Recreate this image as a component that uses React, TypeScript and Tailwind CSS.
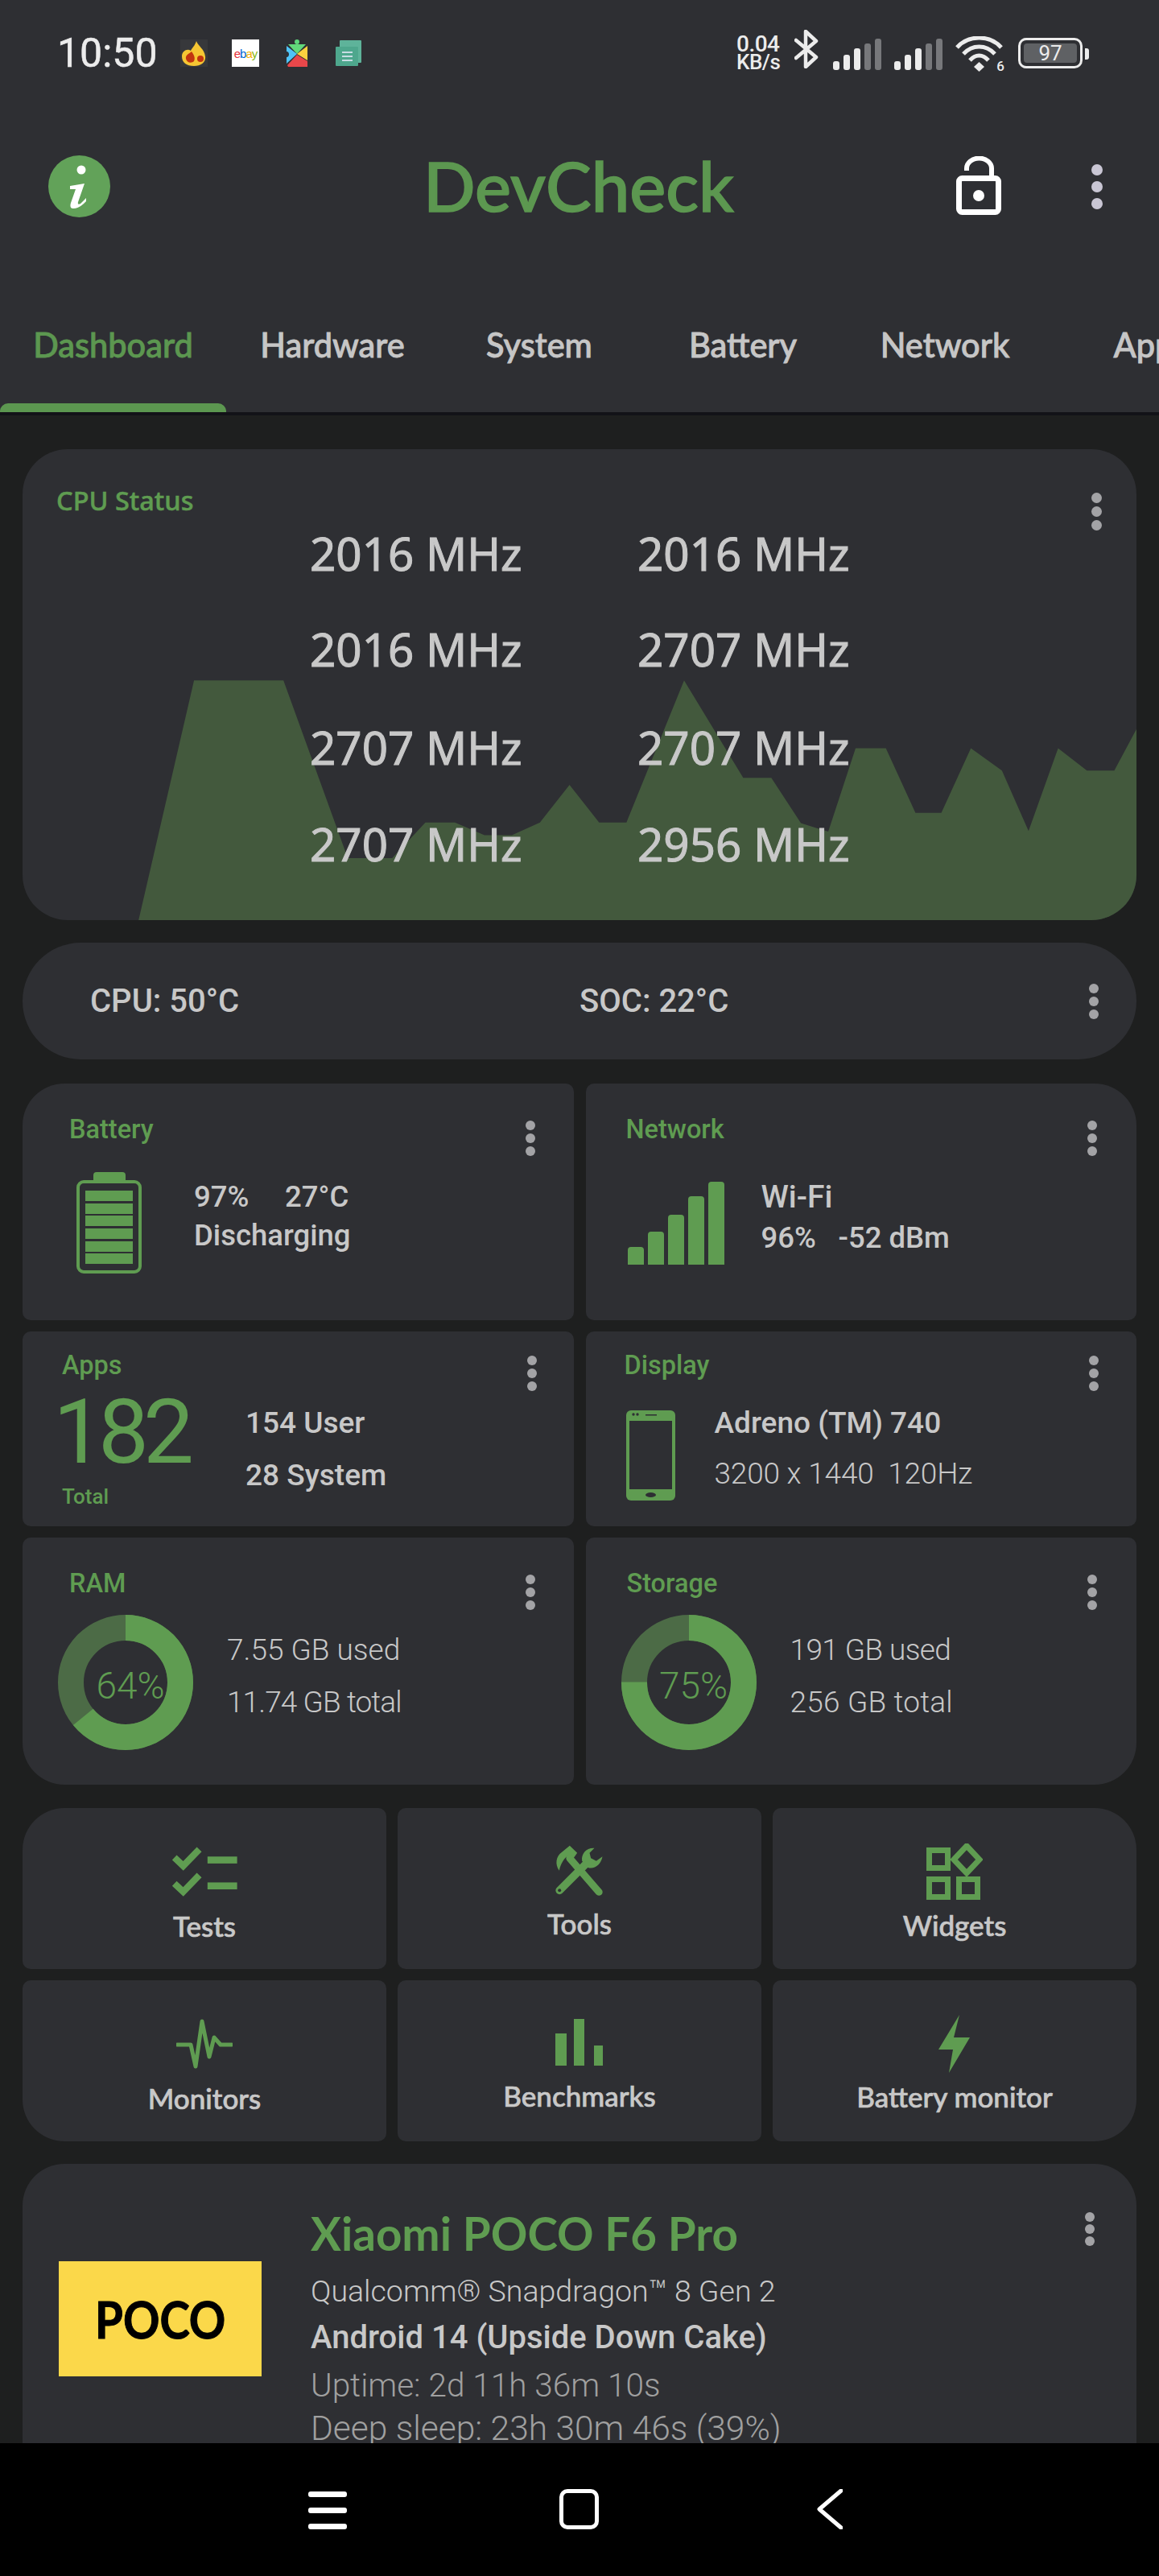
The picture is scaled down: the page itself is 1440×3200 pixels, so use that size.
import React from "react";

const G = "#5f9c51";

function Kebab({ d = 12, gap = 4, cls = "bg-[#a3a3a6]" }: { d?: number; gap?: number; cls?: string }) {
  return (
    <div className="flex flex-col shrink-0" style={{ gap }}>
      {[0, 1, 2].map((i) => (
        <div key={i} className={`rounded-full ${cls}`} style={{ width: d, height: d }} />
      ))}
    </div>
  );
}

function Signal() {
  return (
    <svg width="60" height="39" viewBox="0 0 60 39">
      <rect x="0" y="28" width="8" height="11" rx="3" fill="#ececec" />
      <rect x="13" y="20" width="8" height="19" rx="3" fill="#ececec" />
      <rect x="26" y="12" width="8" height="27" rx="3" fill="#ececec" />
      <rect x="39" y="6" width="8" height="33" rx="3" fill="#77787b" />
      <rect x="52" y="0" width="8" height="39" rx="3" fill="#77787b" />
    </svg>
  );
}

function StatusBar() {
  return (
    <div className="h-[132px] flex items-start pl-[71px] pt-[40px] text-[#ececec]">
      <span className="w-[153px] h-[52px] leading-[52px] text-[50px] font-['Roboto',sans-serif] [-webkit-text-stroke:0.5px_#ececec]">10:50</span>
      <svg width="34" height="34" viewBox="0 0 34 34" className="mt-[9px]">
        <rect width="34" height="34" fill="#37383b" />
        <path d="M20 2 C22 8 30 12 31 21 C32 29 25 33 17 33 C8 33 2 29 2 21 C2 14 9 11 13 14 C15 10 18 8 20 2Z" fill="#f6c633" />
        <path d="M14 15 C17 19 19 23 17 27 C14 30 8 29 7 24 C6 19 11 18 14 15Z" fill="#c2350f" />
        <circle cx="25" cy="24" r="4" fill="#c2350f" />
      </svg>
      <div className="w-[34px] h-[34px] ml-[30px] mt-[9px] bg-white flex items-center justify-center text-[15px] font-['Liberation_Sans',sans-serif] tracking-[-1px] leading-none">
        <span className="text-[#e53238]">e</span>
        <span className="text-[#0064d2]">b</span>
        <span className="text-[#f5af02]">a</span>
        <span className="text-[#86b817]">y</span>
      </div>
      <svg width="26" height="34" viewBox="0 0 26 34" className="ml-[34px] mt-[9px]">
        <circle cx="13" cy="3" r="3" fill="#5fd67c" />
        <path d="M2 6 H24 L13 18Z" fill="#62d97b" />
        <path d="M0 8 L13 18 L0 30 V22 C4 22 4 15 0 15Z" fill="#4fc3f7" />
        <path d="M26 8 V26 L13 18Z" fill="#fbd23f" />
        <path d="M1 32 L13 19 L26 27 V34 H2Z" fill="#e8474a" />
      </svg>
      <svg width="32" height="32" viewBox="0 0 32 32" className="ml-[35px] mt-[10px]">
        <rect x="5" y="0" width="27" height="28" rx="1" fill="#5eb39a" />
        <rect x="0" y="8" width="28" height="24" rx="1" fill="#4ea78d" />
        <path d="M8 15 H21 M8 20 H21 M8 25 H21" stroke="#eef" strokeWidth="1.5" />
      </svg>
      <div className="ml-[466px] w-[58px] mt-[3px] flex flex-col text-[#ececec] font-['Roboto',sans-serif] font-medium">
        <span className="text-[28px] h-[23px] leading-[23px] tracking-[-0.5px]">0.04</span>
        <span className="text-[26px] h-[22px] leading-[22px] tracking-[-0.5px]">KB/s</span>
      </div>
      <svg width="30" height="48" viewBox="0 0 30 48" className="ml-[14px] -mt-[3px]">
        <path d="M2 13 L27 34 L14 46 V2 L27 14 L2 35" fill="none" stroke="#ececec" strokeWidth="4.5" strokeLinejoin="round" strokeLinecap="round" />
      </svg>
      <div className="ml-[18px] mt-[8px]"><Signal /></div>
      <div className="ml-[16px] mt-[8px]"><Signal /></div>
      <div className="relative ml-[16px] mt-[5px] w-[59px] h-[44px]">
        <svg width="59" height="44" viewBox="0 0 59 44">
          <path d="M2 14 C16 -2 43 -2 57 14" fill="none" stroke="#ececec" strokeWidth="5" />
          <path d="M10 22 C21 10 38 10 49 22" fill="none" stroke="#ececec" strokeWidth="5" />
          <path d="M18 30 C25 22 34 22 41 30" fill="none" stroke="#ececec" strokeWidth="5" />
          <path d="M29.5 32 L36 38 L29.5 44 L23 38Z" fill="#ececec" />
        </svg>
        <span className="absolute right-[-2px] bottom-[-2px] text-[17px] leading-none font-['Roboto',sans-serif] font-medium">6</span>
      </div>
      <div className="ml-[19px] mt-[7px] w-[80px] h-[38px] rounded-[10px] border-[3px] border-[#ececec] p-[4px]">
        <div className="w-full h-full rounded-[4px] bg-[#5f6164] flex items-center justify-center text-[26px] leading-none font-['Roboto',sans-serif]">97</div>
      </div>
      <div className="ml-[3px] mt-[20px] w-[5px] h-[14px] rounded-r-[3px] bg-[#ececec]" />
    </div>
  );
}

function AppBar() {
  return (
    <div className="h-[270px] flex items-start pl-[60px] pt-[61px]">
      <svg width="77" height="77" viewBox="0 0 77 77">
        <circle cx="38.5" cy="38.5" r="38.5" fill="#62a259" />
        <circle cx="41" cy="18" r="5.5" fill="#fff" />
        <path d="M27 38 L45 35 L37 58 Q36 62 40 60 L47 53 L47 57 Q39 66 31 66 Q26 66 28 59 L34 42 Q28 42 27 42Z" fill="#fff" />
      </svg>
      <span className="ml-[389px] w-[662px] h-[77px] leading-[75px] text-[85px] font-medium text-[#5c9750] font-['Lato',sans-serif] [-webkit-text-stroke:1.5px_#5c9750]">DevCheck</span>
      <svg width="56" height="73" viewBox="0 0 56 73" className="mt-[1px]">
        <rect x="3.5" y="27.5" width="49" height="42" rx="4" fill="none" stroke="#fff" strokeWidth="7" />
        <path d="M13 18 V15 A15 12 0 0 1 44 15 V27" fill="none" stroke="#fff" strokeWidth="6" />
        <ellipse cx="28" cy="49" rx="7" ry="7" fill="#fff" />
      </svg>
      <div className="ml-[112px] mt-[11px]"><Kebab d={14} gap={7} cls="bg-[#c9c6d4]" /></div>
    </div>
  );
}

function Tabs() {
  const tabs: [string, string][] = [
    ["Dashboard", "w-[281px]"],
    ["Hardware", "w-[264px]"],
    ["System", "w-[250px]"],
    ["Battery", "w-[256px]"],
    ["Network", "w-[246px]"],
    ["Apps", "w-[266px]"],
  ];
  return (
    <div className="flex h-[110px] overflow-hidden font-['Lato',sans-serif] text-[41.5px] font-medium">
      {tabs.map(([t, w], i) => (
        <div
          key={t}
          className={`${w} shrink-0 relative h-[110px] text-center pt-[1px] leading-[50px] ${
            i === 0 ? "text-[#5c9750] [-webkit-text-stroke:0.9px_#5c9750]" : "text-[#c6c6c6] [-webkit-text-stroke:0.9px_#c6c6c6]"
          }`}
        >
          {t}
          {i === 0 && <div className="absolute left-0 right-0 bottom-0 h-[11px] rounded-t-[10px] bg-[#5c9750]" />}
        </div>
      ))}
    </div>
  );
}

const chartPts =
  "187,1525 262,772 383,772 470,1330 530,1330 575,1218 615,1218 655,1258 692,1258 730,1218 770,1100 810,1218 847,1218 925,772 1005,1078 1043,1078 1083,1220 1120,1247 1157,985 1198,985 1238,1188 1273,1188 1313,985 1355,1055 1391,1245 1431,985 1470,1055 1507,1055 1537,925 1537,1525";

function CpuCard() {
  const freqs = ["2016 MHz", "2016 MHz", "2016 MHz", "2707 MHz", "2707 MHz", "2707 MHz", "2707 MHz", "2956 MHz"];
  return (
    <div className="relative shrink-0 h-[585px] rounded-[56px] bg-[#2e2f33] overflow-hidden pt-[44px] pl-[42px] pr-[43px] font-['Noto_Sans',sans-serif]">
      <svg className="absolute inset-0 w-full h-full" viewBox="30 45 1507 1480" preserveAspectRatio="none">
        <polygon points={chartPts} fill="#43593d" />
      </svg>
      <div className="relative flex justify-between h-[26px]">
        <span className="text-[32.5px] leading-[40px] h-[40px] font-medium text-[#5f9c51] [-webkit-text-stroke:0.5px_#5f9c51]">CPU Status</span>
        <div className="mt-[10px]"><Kebab d={13} gap={4} /></div>
      </div>
      <div className="relative ml-[315px] grid grid-cols-[407px_1fr] grid-rows-[120px_118px_126px_114px] items-center text-[56.5px] text-[#c8c8c8] [-webkit-text-stroke:1px_#c8c8c8]">
        {freqs.map((f, i) => (
          <span key={i} className="leading-[70px]">{f}</span>
        ))}
      </div>
    </div>
  );
}

function TempCard() {
  return (
    <div className="h-[145px] rounded-full bg-[#2e2f33] flex items-center pl-[84px] pr-[47px] text-[40px] font-medium text-[#c8c8c8] font-['Roboto',sans-serif]">
      <span className="w-[608px]">CPU: 50°C</span>
      <span className="flex-1">SOC: 22°C</span>
      <Kebab d={12} gap={4} />
    </div>
  );
}

function Title({ children, cls = "" }: { children: React.ReactNode; cls?: string }) {
  return <span className={`h-[40px] leading-[40px] text-[32.5px] font-medium text-[#5f9c51] ${cls}`}>{children}</span>;
}

function BatteryIcon() {
  return (
    <svg width="81" height="126" viewBox="0 0 81 126">
      <rect x="21" y="0" width="40" height="14" rx="4" fill={G} />
      <rect x="2" y="12" width="77" height="112" rx="7" fill="none" stroke={G} strokeWidth="4" />
      {[23, 39, 54, 70, 86, 101].map((y) => (
        <rect key={y} x="11" y={y} width="59" height="13" fill={G} />
      ))}
    </svg>
  );
}

function BarsIcon() {
  const hs = [22, 41, 62, 85, 103];
  return (
    <svg width="120" height="103" viewBox="0 0 120 103">
      {hs.map((h, i) => (
        <path key={i} d={`M${i * 25} 103 V${103 - h + 4} Q${i * 25} ${103 - h} ${i * 25 + 4} ${103 - h} H${i * 25 + 16} Q${i * 25 + 20} ${103 - h} ${i * 25 + 20} ${103 - h + 4} V103Z`} fill={G} />
      ))}
    </svg>
  );
}

function PhoneIcon() {
  return (
    <svg width="61" height="112" viewBox="0 0 61 112">
      <rect width="61" height="112" rx="6" fill={G} />
      <rect x="4" y="13" width="53" height="85" fill="#2e2f33" />
      <circle cx="9" cy="5" r="1.7" fill="#2e2f33" />
      <circle cx="14" cy="5" r="1.7" fill="#2e2f33" />
      <rect x="24" y="5" width="14" height="1.5" fill="#2e2f33" />
      <ellipse cx="30.5" cy="105" rx="6.5" ry="3" fill="#2e2f33" />
    </svg>
  );
}

function Donut({ pct, label }: { pct: number; label: string }) {
  const r = 68;
  const c = 2 * Math.PI * r;
  return (
    <div className="relative w-[168px] h-[168px] shrink-0">
      <svg width="168" height="168" viewBox="0 0 168 168">
        <circle cx="84" cy="84" r={r} fill="none" stroke="#4c6b46" strokeWidth="32" />
        <circle cx="84" cy="84" r={r} fill="none" stroke={G} strokeWidth="32" strokeDasharray={`${(c * pct) / 100} ${c}`} transform="rotate(-90 84 84)" />
      </svg>
      <span className="absolute inset-0 flex items-center justify-center pt-[9px] pl-[12px] text-[46px] text-[#5f9c51] font-['Roboto',sans-serif] font-light">{label}</span>
    </div>
  );
}

function InfoGrid() {
  return (
    <div className="grid grid-cols-2 grid-rows-[294px_242px_307px] gap-x-[15px] gap-y-[14px] font-['Roboto',sans-serif] text-[#c8c8c8]">
      <div className="bg-[#2e2f33] rounded-[10px] rounded-tl-[52px] pt-[37px] pl-[58px] pr-[48px]">
        <div className="flex justify-between h-[40px]">
          <Title>Battery</Title>
          <div className="mt-[9px]"><Kebab /></div>
        </div>
        <div className="flex mt-[33px] pl-[9px]">
          <BatteryIcon />
          <div className="ml-[65px] mt-[7px] text-[36.5px] font-medium">
            <div className="h-[48px] leading-[48px] flex"><span className="w-[113px]">97%</span><span>27°C</span></div>
            <div className="h-[48px] leading-[48px]">Discharging</div>
          </div>
        </div>
      </div>
      <div className="bg-[#2e2f33] rounded-[10px] rounded-tr-[52px] pt-[37px] pl-[50px] pr-[49px]">
        <div className="flex justify-between h-[40px]">
          <Title>Network</Title>
          <div className="mt-[9px]"><Kebab /></div>
        </div>
        <div className="flex mt-[45px] pl-[2px]">
          <BarsIcon />
          <div className="ml-[46px] -mt-[5px] text-[36.5px] font-medium">
            <div className="h-[48px] leading-[48px] text-[39px]">Wi-Fi</div>
            <div className="h-[54px] leading-[54px] flex"><span className="w-[96px]">96%</span><span>-52 dBm</span></div>
          </div>
        </div>
      </div>
      <div className="bg-[#2e2f33] rounded-[10px] pl-[49px] pr-[46px] pt-[22px]">
        <div className="flex justify-between h-[40px]">
          <Title>Apps</Title>
          <div className="mt-[8px]"><Kebab /></div>
        </div>
        <div className="flex -mt-[10px]">
          <div className="w-[234px] -ml-[11px] flex flex-col">
            <span className="mt-[25px] h-[96px] leading-[96px] text-[112px] text-[#5f9c51] tracking-[-7px] font-normal">182</span>
            <span className="ml-[11px] mt-[18px] h-[28px] leading-[28px] text-[26px] font-medium text-[#5f9c51]">Total</span>
          </div>
          <div className="text-[37px] font-medium ml-[5px] mt-[37px]">
            <div className="h-[50px] leading-[50px]">154 User</div>
            <div className="h-[50px] leading-[50px] mt-[15px]">28 System</div>
          </div>
        </div>
      </div>
      <div className="bg-[#2e2f33] rounded-[10px] pl-[48px] pr-[47px] pt-[22px]">
        <div className="flex justify-between h-[40px]">
          <Title>Display</Title>
          <div className="mt-[8px]"><Kebab /></div>
        </div>
        <div className="flex mt-[36px] ml-[2px]">
          <PhoneIcon />
          <div className="ml-[49px] -mt-[9px] text-[37px]">
            <div className="h-[50px] leading-[50px] font-medium">Adreno (TM) 740</div>
            <div className="h-[50px] leading-[50px] mt-[13px] font-light whitespace-pre tracking-[-0.2px]">3200 x 1440  120Hz</div>
          </div>
        </div>
      </div>
      <div className="bg-[#2e2f33] rounded-[10px] rounded-bl-[52px] pl-[58px] pr-[48px] pt-[37px]">
        <div className="flex justify-between h-[40px]">
          <Title>RAM</Title>
          <div className="mt-[9px]"><Kebab /></div>
        </div>
        <div className="flex mt-[19px] -ml-[14px]">
          <Donut pct={64} label="64%" />
          <div className="ml-[42px] mt-[19px] text-[37px] font-light">
            <div className="h-[50px] leading-[50px]">7.55 GB used</div>
            <div className="h-[50px] leading-[50px] mt-[15px] tracking-[-0.9px]">11.74 GB total</div>
          </div>
        </div>
      </div>
      <div className="bg-[#2e2f33] rounded-[10px] rounded-br-[52px] pl-[51px] pr-[49px] pt-[37px]">
        <div className="flex justify-between h-[40px]">
          <Title>Storage</Title>
          <div className="mt-[9px]"><Kebab /></div>
        </div>
        <div className="flex mt-[19px] -ml-[7px]">
          <Donut pct={75} label="75%" />
          <div className="ml-[42px] mt-[19px] text-[37px] font-light">
            <div className="h-[50px] leading-[50px] tracking-[-0.6px]">191 GB used</div>
            <div className="h-[50px] leading-[50px] mt-[15px] tracking-[0.2px]">256 GB total</div>
          </div>
        </div>
      </div>
    </div>
  );
}

const Check = ({ y }: { y: number }) => (
  <g transform={`translate(0 ${y})`}>
    <polyline points="50,84 83,115 143,53" fill="none" stroke={G} strokeWidth="25" />
    <rect x="174" y="80" width="111" height="26" fill={G} />
  </g>
);

const icons: Record<string, React.ReactNode> = {
  Tests: (
    <svg width="82" height="63" viewBox="40 40 245 190">
      <Check y={0} />
      <Check y={97} />
    </svg>
  ),
  Tools: (
    <svg width="62" height="65" viewBox="90 60 185 195">
      <path d="M146 65 L174 92 L157 116 L141 101 C125 112 112 132 107 158 C90 135 95 105 116 90Z" fill={G} />
      <line x1="146" y1="112" x2="255" y2="238" stroke={G} strokeWidth="27" strokeLinecap="round" />
      <line x1="108" y1="232" x2="215" y2="125" stroke={G} strokeWidth="29" strokeLinecap="round" />
      <path d="M238 74 C208 72 188 95 192 122 L212 146 C235 155 262 140 268 106 L245 122 L225 112 L220 92Z" fill={G} />
      <circle cx="108" cy="232" r="6" fill="#2e2f33" />
    </svg>
  ),
  Widgets: (
    <svg width="70" height="70" viewBox="0 0 70 70" fill="none" stroke={G} strokeWidth="7">
      <rect x="3.5" y="8.5" width="23" height="22" />
      <path d="M50 3 L66 20 L50 37 L34 20Z" />
      <rect x="3.5" y="44.5" width="23" height="22" />
      <rect x="40.5" y="44.5" width="23" height="22" />
    </svg>
  ),
  Monitors: (
    <svg width="70" height="68" viewBox="0 0 70 68">
      <polyline points="1,35 18,35 24,62 32,6 41,50 47,26 55,35 69,35" fill="none" stroke={G} strokeWidth="5" strokeLinejoin="round" strokeLinecap="round" />
    </svg>
  ),
  Benchmarks: (
    <svg width="60" height="58" viewBox="0 0 60 58" fill={G}>
      <rect x="0" y="18" width="14" height="40" />
      <rect x="23" y="0" width="13" height="58" />
      <rect x="48" y="33" width="11" height="25" />
    </svg>
  ),
  "Battery monitor": (
    <svg width="40" height="72" viewBox="0 0 40 72">
      <polygon points="26,0 0,43 18,43 13,72 39,28 19,28" fill={G} />
    </svg>
  ),
};

function ActionCell({ label, cls, iconTop, textTop }: { label: string; cls: string; iconTop: number; textTop: number }) {
  return (
    <div className={`bg-[#2e2f33] h-[200px] flex flex-col items-center ${cls}`}>
      <div className="h-[72px] flex items-start justify-center" style={{ marginTop: iconTop }}>{icons[label]}</div>
      <span className="h-[44px] leading-[44px] text-[35px] font-medium text-[#c8c8c8] font-['Lato',sans-serif] [-webkit-text-stroke:0.7px_#c8c8c8]" style={{ marginTop: textTop }}>{label}</span>
    </div>
  );
}

function Actions() {
  return (
    <div className="grid grid-cols-3 gap-x-[14px] gap-y-[14px]">
      <ActionCell label="Tests" cls="rounded-[10px] rounded-tl-[52px]" iconTop={47} textTop={5} />
      <ActionCell label="Tools" cls="rounded-[10px]" iconTop={45} textTop={4} />
      <ActionCell label="Widgets" cls="rounded-[10px] rounded-tr-[52px]" iconTop={44} textTop={7} />
      <ActionCell label="Monitors" cls="rounded-[10px] rounded-bl-[52px]" iconTop={45} textTop={7} />
      <ActionCell label="Benchmarks" cls="rounded-[10px]" iconTop={48} textTop={1} />
      <ActionCell label="Battery monitor" cls="rounded-[10px] rounded-br-[52px]" iconTop={43} textTop={7} />
    </div>
  );
}

function DeviceCard() {
  return (
    <div className="bg-[#2e2f33] rounded-t-[52px] shrink-0 h-[420px] flex pl-[45px] pr-[52px] text-[#c8c8c8] font-['Roboto',sans-serif]">
      <div className="w-[252px] h-[143px] mt-[121px] bg-[#fbd84a] flex items-center justify-center text-black shrink-0">
        <span className="text-[64px] font-bold font-['Lato',sans-serif] scale-x-[0.88] [-webkit-text-stroke:1px_#000]">POCO</span>
      </div>
      <div className="ml-[61px] flex-1 pt-[55px]">
        <div className="h-[62px] leading-[62px] text-[56.5px] font-bold text-[#5f9c51] font-['Lato',sans-serif]">Xiaomi POCO F6 Pro</div>
        <div className="h-[50px] leading-[50px] mt-[16px] text-[37.5px] font-light">Qualcomm® Snapdragon™ 8 Gen 2</div>
        <div className="h-[50px] leading-[50px] mt-[8px] text-[40px] font-medium">Android 14 (Upside Down Cake)</div>
        <div className="h-[50px] leading-[50px] mt-[9px] text-[40.5px] font-light text-[#a0a0a0]">Uptime: 2d 11h 36m 10s</div>
        <div className="h-[50px] leading-[50px] mt-[4px] text-[42.5px] font-light text-[#a0a0a0] whitespace-nowrap">Deep sleep: 23h 30m 46s (39%)</div>
      </div>
      <div className="mt-[60px]"><Kebab d={12} gap={3} /></div>
    </div>
  );
}

function NavBar() {
  return (
    <div className="h-[165px] bg-black flex items-start justify-center pt-[57px] pr-[10px] shrink-0">
      <div className="w-[48px] h-[50px] flex flex-col gap-[13px] pt-[3px]">
        <div className="h-[7px] rounded-[3px] bg-white" />
        <div className="h-[7px] rounded-[3px] bg-white" />
        <div className="h-[7px] rounded-[3px] bg-white" />
      </div>
      <div className="ml-[264px] w-[49px] h-[50px] rounded-[10px] border-[5px] border-white" />
      <svg width="32" height="50" viewBox="0 0 32 50" className="ml-[271px]">
        <path d="M30 2 L3 25 L30 48" fill="none" stroke="#fff" strokeWidth="5" strokeLinecap="round" strokeLinejoin="round" />
      </svg>
    </div>
  );
}

export default function App() {
  return (
    <div className="w-[1440px] h-[3200px] flex flex-col overflow-hidden bg-[#1e1f1f]">
      <header className="h-[516px] shrink-0 bg-[#2e2f33] border-b-[4px] border-[#131318]">
        <StatusBar />
        <AppBar />
        <Tabs />
      </header>
      <main className="flex-1 min-h-0 overflow-hidden px-[28px] pt-[42px] flex flex-col">
        <CpuCard />
        <div className="mt-[28px] shrink-0"><TempCard /></div>
        <div className="mt-[30px] shrink-0"><InfoGrid /></div>
        <div className="mt-[29px] shrink-0"><Actions /></div>
        <div className="mt-[28px] shrink-0"><DeviceCard /></div>
      </main>
      <NavBar />
    </div>
  );
}
